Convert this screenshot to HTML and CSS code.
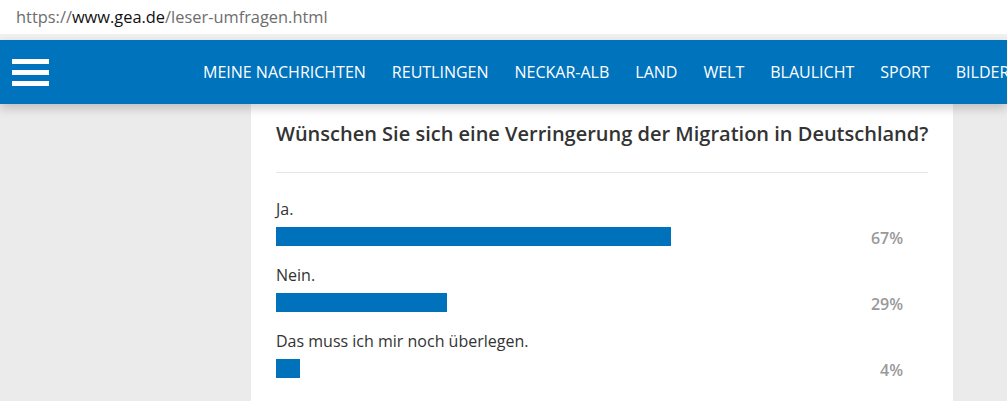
FILE: index.html
```html
<!DOCTYPE html>
<html lang="de">
<head>
    <meta charset="UTF-8">
    <meta name="viewport" content="width=device-width, initial-scale=1.0">
    <title>Leser-Umfragen</title>
    <link rel="stylesheet" href="styles.css">
</head>
<body>
    <div class="adresse">
        https://<span class="domain">www.gea.de</span>/leser-umfragen.html
    </div>
    <div class="trenner"></div>

    <nav class="navi">
        <div class="burger">
            <span></span>
            <span></span>
            <span></span>
        </div>
        <ul class="menue">
            <li>MEINE NACHRICHTEN</li>
            <li>REUTLINGEN</li>
            <li>NECKAR-ALB</li>
            <li>LAND</li>
            <li>WELT</li>
            <li>BLAULICHT</li>
            <li>SPORT</li>
            <li>BILDER</li>
        </ul>
    </nav>

    <main class="seite">
        <div class="umfrage">
            <h2 class="frage">Wünschen Sie sich eine Verringerung der Migration in Deutschland?</h2>

            <div class="antwort">
                <div class="text">Ja.</div>
                <div class="zeile">
                    <div class="spur"><div class="balken" style="width: 67%"></div></div>
                    <div class="prozent">67%</div>
                </div>
            </div>

            <div class="antwort">
                <div class="text">Nein.</div>
                <div class="zeile">
                    <div class="spur"><div class="balken" style="width: 29%"></div></div>
                    <div class="prozent">29%</div>
                </div>
            </div>

            <div class="antwort">
                <div class="text">Das muss ich mir noch überlegen.</div>
                <div class="zeile">
                    <div class="spur"><div class="balken" style="width: 4%"></div></div>
                    <div class="prozent">4%</div>
                </div>
            </div>
        </div>
    </main>
</body>
</html>
```

FILE: styles.css
```css
body {
    margin: 0;
    height: 100vh;
    display: flex;
    flex-direction: column;
    font-family: "Open Sans", Arial, sans-serif;
    background-color: #ebebeb;
    overflow: hidden;
}
.adresse {
    background: white;
    height: 34px;
    line-height: 34px;
    padding-left: 16px;
    font-size: 16.4px;
    color: #6d6d6d;
    white-space: nowrap;
}
.domain {
    color: #111;
}
.trenner {
    height: 6px;
    background: #f1f1f1;
}
.navi {
    background-color: #0073bd;
    height: 64px;
    flex-shrink: 0;
    display: flex;
    align-items: center;
    position: relative;
    z-index: 2;
    box-shadow: 0px 4px 10px rgba(0, 0, 0, 0.2);
}
.burger {
    width: 37px;
    flex-shrink: 0;
    margin-left: 12px;
    display: flex;
    flex-direction: column;
    gap: 6px;
}
.burger span {
    display: block;
    height: 5px;
    background: white;
}
.menue {
    list-style-type: none;
    margin: 0;
    padding: 0 0 0 154px;
    flex-shrink: 0;
    display: flex;
    gap: 26px;
    white-space: nowrap;
}
.menue li {
    color: white;
    font-size: 16px;
}
.seite {
    flex: 1;
    display: flex;
    padding-left: 251px;
}
.umfrage {
    background: white;
    width: 652px;
    padding: 16px 25px 0 25px;
}
.frage {
    margin: 0;
    font-size: 20px;
    font-weight: 600;
    color: #333;
    white-space: nowrap;
    padding-bottom: 25px;
    border-bottom: 1px solid #e6e6e6;
    margin-bottom: 25px;
}
.antwort {
    margin-bottom: 18px;
}
.text {
    font-size: 16px;
    color: #333;
    line-height: 22px;
    margin-bottom: 7px;
}
.zeile {
    display: flex;
    align-items: flex-end;
}
.spur {
    width: 590px;
}
.balken {
    height: 19px;
    background-color: #0072bc;
}
.prozent {
    width: 37px;
    text-align: right;
    font-size: 16px;
    font-weight: 600;
    color: #999;
    line-height: 20px;
    margin-bottom: -2px;
}
```
